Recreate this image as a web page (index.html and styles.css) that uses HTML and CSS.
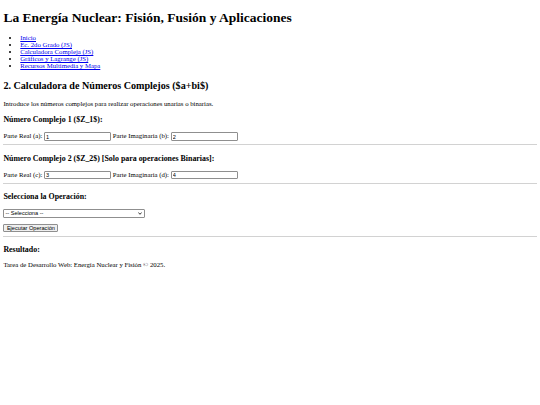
FILE: index.html
```html
<!DOCTYPE html>
<html lang="es">
<head>
<meta charset="utf-8">
<title>La Energía Nuclear</title>
<link rel="stylesheet" href="styles.css">
</head>
<body>
<h1 class="title">La Energía Nuclear: Fisión, Fusión y Aplicaciones</h1>
<ul class="nav">
  <li><a href="#">Inicio</a></li>
  <li><a href="#">Ec. 2do Grado (JS)</a></li>
  <li><a href="#">Calculadora Compleja (JS)</a></li>
  <li><a href="#">Gráficos y Lagrange (JS)</a></li>
  <li><a href="#">Recursos Multimedia y Mapa</a></li>
</ul>
<h2 class="section">2. Calculadora de Números Complejos ($a+bi$)</h2>
<p class="text">Introduce los números complejos para realizar operaciones unarias o binarias.</p>

<h3 class="sub">Número Complejo 1 ($Z_1$):</h3>
<div class="row">
  <label>Parte Real (a):</label>
  <input class="field" type="text" value="1">
  <label>Parte Imaginaria (b):</label>
  <input class="field" type="text" value="2">
</div>
<hr class="rule">

<h3 class="sub">Número Complejo 2 ($Z_2$) [Solo para operaciones Binarias]:</h3>
<div class="row">
  <label>Parte Real (c):</label>
  <input class="field" type="text" value="3">
  <label>Parte Imaginaria (d):</label>
  <input class="field" type="text" value="4">
</div>
<hr class="rule">

<h3 class="sub">Selecciona la Operación:</h3>
<div class="row">
  <span class="select-wrap">
    <select class="picker">
      <option>-- Selecciona --</option>
    </select>
    <svg class="chevron" width="4" height="3" viewBox="0 0 4 3" aria-hidden="true"><path d="M0.4 0.5 L2 2.3 L3.6 0.5" fill="none" stroke="#222" stroke-width="0.9"/></svg>
  </span>
</div>
<div class="row btn-row">
  <button class="action" type="button">Ejecutar Operación</button>
</div>
<hr class="rule">

<h3 class="sub">Resultado:</h3>
<p class="text">Tarea de Desarrollo Web: Energía Nuclear y Fisión © 2025.</p>
</body>
</html>
```

FILE: styles.css
```css
html, body {
  background: #fff;
}
body {
  margin: 3.375px;
  font-family: "Liberation Serif", "Times New Roman", serif;
  font-size: 6.75px;
  color: #000;
}
.title {
  font-size: 13.5px;
  margin: 7px 0 8px;
  font-weight: bold;
}
.nav {
  margin: 0;
  padding-left: 16.875px;
  list-style: disc;
}
.nav a {
  color: #0000ee;
  text-decoration: underline;
}
.section {
  font-size: 10.125px;
  margin: 10.4px 0 9.4px;
  font-weight: bold;
}
.text {
  margin: 6.75px 0;
}
.sub {
  font-size: 7.9px;
  margin: 7.9px 0 7px;
  font-weight: bold;
}
.rule + .sub {
  margin-top: 8.4px;
}
.row {
  margin: 0;
  line-height: 9px;
}
.btn-row {
  margin-top: 5px;
}
.field {
  box-sizing: border-box;
  width: 67px;
  height: 8.5px;
  padding: 0 1px;
  margin: 0;
  border: 1px solid #8f8f8f;
  border-radius: 1px;
  font-family: "Liberation Sans", Arial, sans-serif;
  font-size: 5.625px;
  color: #000;
  background: #fff;
  vertical-align: middle;
}
.rule {
  border: none;
  border-top: 1px solid #d2d2d2;
  height: 0;
  margin: 3.375px 0;
}
.select-wrap {
  position: relative;
  display: inline-block;
  vertical-align: middle;
  line-height: 0;
}
.picker {
  box-sizing: border-box;
  width: 142px;
  height: 8.5px;
  padding: 0 1px;
  margin: 0;
  border: 1px solid #8f8f8f;
  border-radius: 1px;
  font-family: "Liberation Sans", Arial, sans-serif;
  font-size: 5.625px;
  background: #fff;
  color: #000;
  -webkit-appearance: none;
  appearance: none;
}
.chevron {
  position: absolute;
  right: 3px;
  top: 3px;
  pointer-events: none;
}
.action {
  box-sizing: border-box;
  height: 8.5px;
  padding: 0 2.5px;
  margin: 0;
  border: 1px solid #8f8f8f;
  border-radius: 1px;
  background: #efefef;
  font-family: "Liberation Sans", Arial, sans-serif;
  font-size: 5.625px;
  line-height: 6px;
  color: #000;
  vertical-align: middle;
}
```
